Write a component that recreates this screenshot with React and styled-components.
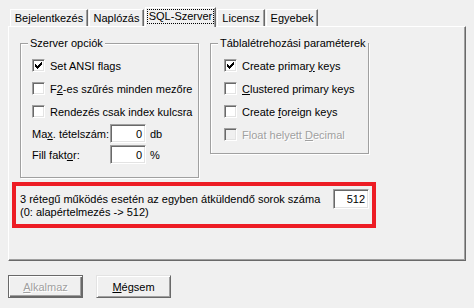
import React from "react";
import styled, { createGlobalStyle } from "styled-components";

const GlobalStyle = createGlobalStyle`
  html, body {
    margin: 0;
    padding: 0;
    background: #f0f0f0;
  }
  body {
    font-family: "Liberation Sans", Arial, sans-serif;
    font-size: 11px;
    color: #000;
  }
`;

const Window = styled.div`
  width: 474px;
  height: 308px;
  box-sizing: border-box;
  padding: 7px 8px 0;
  background: #f0f0f0;
`;

const TabBar = styled.div`
  display: flex;
  align-items: flex-end;
  height: 19px;
  padding-left: 2px;
  position: relative;
  z-index: 1;
`;

const Tab = styled.div`
  box-sizing: border-box;
  width: ${(props) => props.$width}px;
  height: ${(props) => (props.$active ? 20 : 17)}px;
  margin-right: 1px;
  margin-bottom: ${(props) => (props.$active ? -1 : 0)}px;
  padding-bottom: ${(props) => (props.$active ? 2 : 0)}px;
  display: flex;
  align-items: center;
  justify-content: center;
  background: #f0f0f0;
  border-top: 1px solid #fff;
  border-left: 1px solid #fff;
  border-right: 1px solid #696969;
  box-shadow: inset -1px 0 #a0a0a0;
  white-space: nowrap;
`;

const FocusText = styled.span`
  outline: 1px dotted #000;
  outline-offset: 0;
  padding: 0 1px;
  line-height: 13px;
`;

const Panel = styled.div`
  box-sizing: border-box;
  height: 235px;
  border: 1px solid;
  border-color: #fff #696969 #696969 #fff;
  box-shadow: inset -1px -1px #a0a0a0;
  display: flex;
  flex-direction: column;
`;

const GroupsRow = styled.div`
  display: flex;
  align-items: flex-start;
  gap: 11px;
  padding: 16px 0 0 11px;
`;

const Group = styled.div`
  position: relative;
  box-sizing: border-box;
  width: ${(props) => props.$width}px;
  height: ${(props) => props.$height}px;
  padding: 10px 0 0 ${(props) => props.$inset}px;
  border: 1px solid #a0a0a0;
  box-shadow: inset 1px 1px #fff, 1px 1px #fff;
`;

const GroupTitle = styled.span`
  position: absolute;
  top: -7px;
  left: 7px;
  padding: 0 2px;
  line-height: 13px;
  background: #f0f0f0;
  white-space: nowrap;
`;

const CheckRow = styled.div`
  display: flex;
  align-items: center;
  gap: 5px;
  height: 23px;
  white-space: nowrap;
  color: ${(props) => (props.$disabled ? "#a0a0a0" : "#000")};
  text-shadow: ${(props) => (props.$disabled ? "1px 1px #fff" : "none")};
`;

const CheckBox = styled.span`
  box-sizing: border-box;
  width: 13px;
  height: 13px;
  flex: none;
  display: flex;
  align-items: center;
  justify-content: center;
  border: 1px solid;
  border-color: #a0a0a0 #fff #fff #a0a0a0;
  box-shadow: inset 1px 1px #696969, inset -1px -1px #e3e3e3;
  background: ${(props) => (props.$disabled ? "#f0f0f0" : "#fff")};
`;

const FieldRow = styled.div`
  display: flex;
  align-items: center;
  height: 21px;
  white-space: nowrap;
`;

const FieldLabel = styled.span`
  width: 78px;
`;

const NumberBox = styled.div`
  box-sizing: border-box;
  width: ${(props) => props.$width}px;
  height: ${(props) => props.$height}px;
  flex: none;
  padding-right: 3px;
  display: flex;
  align-items: center;
  justify-content: flex-end;
  border: 1px solid;
  border-color: #a0a0a0 #fff #fff #a0a0a0;
  box-shadow: inset 1px 1px #696969, inset -1px -1px #e3e3e3;
  background: #fff;
`;

const Unit = styled.span`
  margin-left: 4px;
`;

const Highlight = styled.div`
  box-sizing: border-box;
  width: 364px;
  height: 46px;
  margin: 4px 0 0 3px;
  padding: 0 3px 0 4px;
  border: 4px solid #ed1c24;
  display: flex;
  align-items: flex-start;
`;

const HighlightText = styled.div`
  flex: 1;
  padding-top: 7px;
  line-height: 13px;
  white-space: nowrap;
`;

const HighlightInput = styled(NumberBox)`
  margin-top: 3px;
`;

const ButtonRow = styled.div`
  display: flex;
  gap: 13px;
  margin-top: 14px;
`;

const Button = styled.button`
  box-sizing: border-box;
  width: 75px;
  height: 23px;
  padding: 0;
  font: inherit;
  background: #f0f0f0;
  color: ${(props) => (props.$disabled ? "#a0a0a0" : "#000")};
  text-shadow: ${(props) => (props.$disabled ? "1px 1px #fff" : "none")};
  border: 1px solid;
  border-color: ${(props) =>
    props.$default ? "#696969" : "#e3e3e3 #696969 #696969 #e3e3e3"};
  box-shadow: ${(props) =>
    props.$default
      ? "inset 1px 1px #fff, inset -1px -1px #696969, inset -2px -2px #a0a0a0"
      : "inset 1px 1px #fff, inset -1px -1px #a0a0a0"};
`;

const checkCols = [2, 3, 4, 3, 2, 1, 0];

const CheckMark = () => (
  <svg width="7" height="7" viewBox="0 0 7 7" shapeRendering="crispEdges">
    {checkCols.map((top, i) => (
      <rect key={i} x={i} y={top} width="1" height="3" fill="#000" />
    ))}
  </svg>
);

const Check = ({ checked, disabled, children }) => (
  <CheckRow $disabled={disabled}>
    <CheckBox $disabled={disabled}>{checked && <CheckMark />}</CheckBox>
    <span>{children}</span>
  </CheckRow>
);

const tabs = [
  { label: "Bejelentkezés", width: 78 },
  { label: "Naplózás", width: 55 },
  { label: "SQL-Szerver", width: 71, active: true },
  { label: "Licensz", width: 48 },
  { label: "Egyebek", width: 52 },
];

const App = () => (
  <Window>
    <GlobalStyle />
    <TabBar>
      {tabs.map((tab) => (
        <Tab key={tab.label} $width={tab.width} $active={tab.active}>
          {tab.active ? <FocusText>{tab.label}</FocusText> : tab.label}
        </Tab>
      ))}
    </TabBar>
    <Panel>
      <GroupsRow>
        <Group $width={179} $height={135} $inset={11}>
          <GroupTitle>Szerver opciók</GroupTitle>
          <Check checked>Set ANSI flags</Check>
          <Check>
            F<u>2</u>-es szűrés minden mezőre
          </Check>
          <Check>Rendezés csak index kulcsra</Check>
          <FieldRow>
            <FieldLabel>
              Ma<u>x</u>. tételszám:
            </FieldLabel>
            <NumberBox $width={36} $height={19}>0</NumberBox>
            <Unit>db</Unit>
          </FieldRow>
          <FieldRow>
            <FieldLabel>
              Fill fakt<u>o</u>r:
            </FieldLabel>
            <NumberBox $width={36} $height={19}>0</NumberBox>
            <Unit>%</Unit>
          </FieldRow>
        </Group>
        <Group $width={159} $height={111} $inset={13}>
          <GroupTitle>Táblalétrehozási paraméterek</GroupTitle>
          <Check checked>
            Create primar<u>y</u> keys
          </Check>
          <Check>
            <u>C</u>lustered primary keys
          </Check>
          <Check>
            Create <u>f</u>oreign keys
          </Check>
          <Check disabled>
            Float helyett <u>D</u>ecimal
          </Check>
        </Group>
      </GroupsRow>
      <Highlight>
        <HighlightText>
          3 rétegű működés esetén az egyben átküldendő sorok száma
          <br />
          (0: alapértelmezés -&gt; 512)
        </HighlightText>
        <HighlightInput $width={36} $height={20}>512</HighlightInput>
      </Highlight>
    </Panel>
    <ButtonRow>
      <Button $default $disabled>
        <u>A</u>lkalmaz
      </Button>
      <Button>
        <u>M</u>égsem
      </Button>
    </ButtonRow>
  </Window>
);

export default App;
